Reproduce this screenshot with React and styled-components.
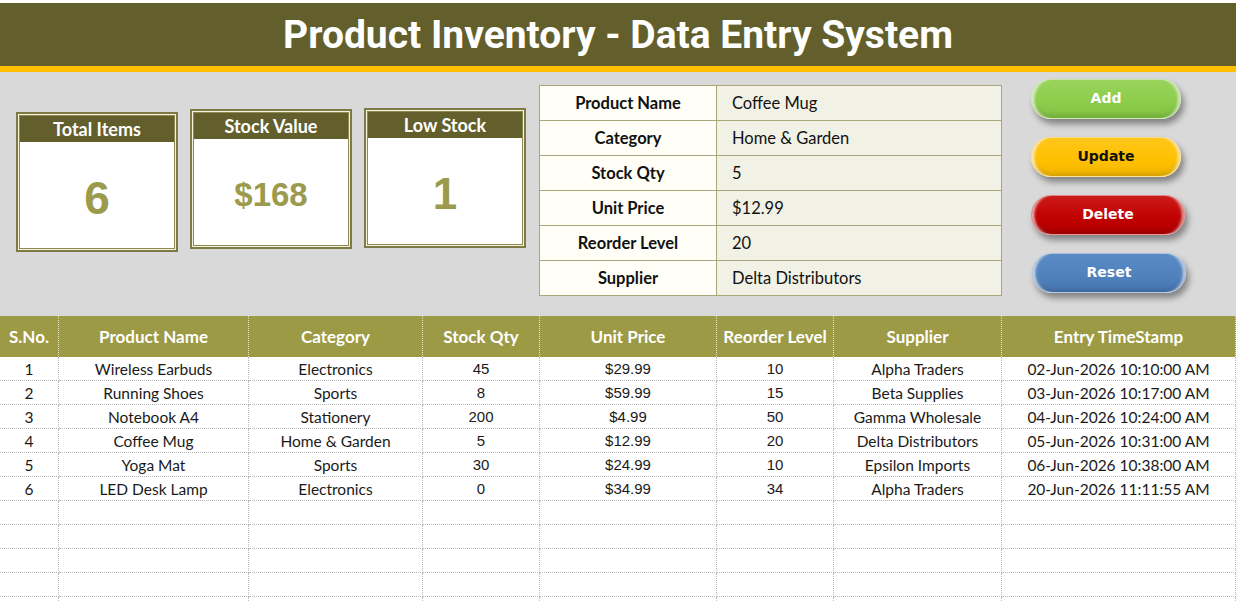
import React from "react";
import styled, { createGlobalStyle } from "styled-components";

const Global = createGlobalStyle`
  html, body { margin: 0; padding: 0; background: #ffffff; }
  body { font-family: "Lato", "Liberation Sans", sans-serif; overflow: hidden; }
`;

const Page = styled.div`
  width: 1236px;
  height: 602px;
  overflow: hidden;
  background: #ffffff;
  padding-top: 3px;
  box-sizing: border-box;
`;

const TitleBar = styled.header`
  height: 63px;
  background: #635f2d;
  border-bottom: 6px solid #ffc000;
  display: flex;
  align-items: center;
  justify-content: center;
`;

const Title = styled.h1`
  margin: 0;
  color: #ffffff;
  font-family: "Roboto", "Liberation Sans", sans-serif;
  font-weight: 700;
  font-size: 39px;
  letter-spacing: 0;
  padding-top: 1px;
`;

const Dashboard = styled.section`
  height: 244px;
  background: #d9d9d9;
  display: flex;
  align-items: flex-start;
  box-sizing: border-box;
  padding-left: 16px;
`;

const Cards = styled.div`
  display: flex;
  align-items: flex-start;
  gap: 12px;
  margin-top: 36px;
`;

const Card = styled.div`
  width: 162px;
  height: 140px;
  box-sizing: border-box;
  margin-top: ${(p) => p.$drop || 0}px;
  border: 2px solid #7d7a44;
  box-shadow: inset 0 0 0 1px #f4f2dc, inset 0 0 0 2px #8e8a52;
  background: #ffffff;
  padding: 2px;
  display: flex;
  flex-direction: column;
`;

const CardHead = styled.div`
  height: 26px;
  background: #635f2d;
  color: #ffffff;
  font-weight: 700;
  font-size: 18px;
  display: flex;
  align-items: center;
  justify-content: center;
`;

const CardValue = styled.div`
  flex: 1;
  display: flex;
  align-items: center;
  justify-content: center;
  color: #9b9a4d;
  font-family: "Liberation Sans", Arial, sans-serif;
  font-weight: 700;
  font-size: ${(p) => p.$size}px;
  padding-top: 6px;
`;

const Form = styled.div`
  margin-left: 13px;
  margin-top: 13px;
  display: grid;
  grid-template-columns: 177px 285px;
  border-top: 1px solid #aaa67a;
  border-left: 1px solid #aaa67a;
`;

const Label = styled.div`
  height: 34px;
  background: #fffff8;
  border-right: 1px solid #aaa67a;
  border-bottom: 1px solid #aaa67a;
  display: flex;
  align-items: center;
  justify-content: center;
  font-weight: 700;
  font-size: 16.5px;
  color: #111111;
`;

const Value = styled.div`
  height: 34px;
  background: #f2f1e6;
  border-right: 1px solid #aaa67a;
  border-bottom: 1px solid #aaa67a;
  display: flex;
  align-items: center;
  padding-left: 15px;
  font-size: 16.5px;
  color: #111111;
`;

const Buttons = styled.div`
  margin-left: 29px;
  margin-top: 7px;
  display: flex;
  flex-direction: column;
  gap: 18px;
`;

const Button = styled.button`
  width: ${(p) => p.$w || 150}px;
  height: 40px;
  border-radius: 20px;
  border: 1px solid rgba(255, 255, 255, 0.55);
  background: ${(p) => p.$bg};
  color: ${(p) => p.$fg || "#ffffff"};
  font-family: "DejaVu Sans", Verdana, sans-serif;
  font-weight: 700;
  font-size: 14px;
  cursor: pointer;
  box-shadow: 3px 5px 6px rgba(0, 0, 0, 0.4),
    inset 5px 0 3px -3px rgba(255, 255, 255, 0.8),
    inset -5px 0 3px -3px rgba(255, 255, 255, 0.65),
    inset 0 -3px 4px rgba(0, 0, 0, 0.12);
  padding: 0 0 2px 0;
  margin-left: ${(p) => p.$ml || 0}px;
`;

const Table = styled.div`
  display: grid;
  grid-template-columns: 59px 190px 174px 117px 177px 117px 168px 234px;
`;

const Th = styled.div`
  height: 41px;
  background: #9c9a45;
  color: #ffffff;
  font-weight: 700;
  font-size: 17px;
  display: flex;
  align-items: center;
  justify-content: center;
  border-right: 1px dotted #e6e4c8;
  box-sizing: border-box;
  white-space: nowrap;
  padding-bottom: 1px;
`;

const Td = styled.div`
  height: 24px;
  box-sizing: border-box;
  border-right: 1px dotted #b8b8b8;
  border-bottom: 1px dotted #b8b8b8;
  display: flex;
  align-items: center;
  justify-content: center;
  font-size: 15.5px;
  color: #1a1a1a;
  font-family: ${(p) =>
    p.$num ? '"Liberation Sans", Arial, sans-serif' : '"Lato", "Liberation Sans", sans-serif'};
  ${(p) => (p.$num ? "font-size: 15px;" : "")}
  white-space: nowrap;
`;

const fields = [
  ["Product Name", "Coffee Mug"],
  ["Category", "Home & Garden"],
  ["Stock Qty", "5"],
  ["Unit Price", "$12.99"],
  ["Reorder Level", "20"],
  ["Supplier", "Delta Distributors"],
];

const headers = [
  "S.No.",
  "Product Name",
  "Category",
  "Stock Qty",
  "Unit Price",
  "Reorder Level",
  "Supplier",
  "Entry TimeStamp",
];

const rows = [
  ["1", "Wireless Earbuds", "Electronics", "45", "$29.99", "10", "Alpha Traders", "02-Jun-2026 10:10:00 AM"],
  ["2", "Running Shoes", "Sports", "8", "$59.99", "15", "Beta Supplies", "03-Jun-2026 10:17:00 AM"],
  ["3", "Notebook A4", "Stationery", "200", "$4.99", "50", "Gamma Wholesale", "04-Jun-2026 10:24:00 AM"],
  ["4", "Coffee Mug", "Home & Garden", "5", "$12.99", "20", "Delta Distributors", "05-Jun-2026 10:31:00 AM"],
  ["5", "Yoga Mat", "Sports", "30", "$24.99", "10", "Epsilon Imports", "06-Jun-2026 10:38:00 AM"],
  ["6", "LED Desk Lamp", "Electronics", "0", "$34.99", "34", "Alpha Traders", "20-Jun-2026 11:11:55 AM"],
];

const numCols = [3, 4, 5];

export default function App() {
  const blanks = Array.from({ length: 5 }, () => Array(8).fill(""));
  return (
    <Page>
      <Global />
      <TitleBar>
        <Title>Product Inventory - Data Entry System</Title>
      </TitleBar>
      <Dashboard>
        <Cards>
          <Card $drop={4}>
            <CardHead>Total Items</CardHead>
            <CardValue $size={46}>6</CardValue>
          </Card>
          <Card $drop={1}>
            <CardHead>Stock Value</CardHead>
            <CardValue $size={33}>$168</CardValue>
          </Card>
          <Card>
            <CardHead>Low Stock</CardHead>
            <CardValue $size={44}>1</CardValue>
          </Card>
        </Cards>
        <Form>
          {fields.map(([l, v]) => (
            <React.Fragment key={l}>
              <Label>{l}</Label>
              <Value>{v}</Value>
            </React.Fragment>
          ))}
        </Form>
        <Buttons>
          <Button $bg="linear-gradient(#98d45a, #8ccc4c 60%, #82c142)">Add</Button>
          <Button $bg="linear-gradient(#ffc61a, #ffc000 60%, #f2b600)" $fg="#111111">
            Update
          </Button>
          <Button $bg="linear-gradient(#cc1a1a, #c00000 60%, #b00000)" $w={154}>
            Delete
          </Button>
          <Button $bg="linear-gradient(#5a8bc6, #4f81bd 60%, #4876b0)" $w={154} $ml={1}>
            Reset
          </Button>
        </Buttons>
      </Dashboard>
      <Table>
        {headers.map((h) => (
          <Th key={h}>{h}</Th>
        ))}
        {[...rows, ...blanks].map((r, i) =>
          r.map((c, j) => (
            <Td key={i + "-" + j} $num={numCols.includes(j)}>
              {c}
            </Td>
          ))
        )}
      </Table>
    </Page>
  );
}
